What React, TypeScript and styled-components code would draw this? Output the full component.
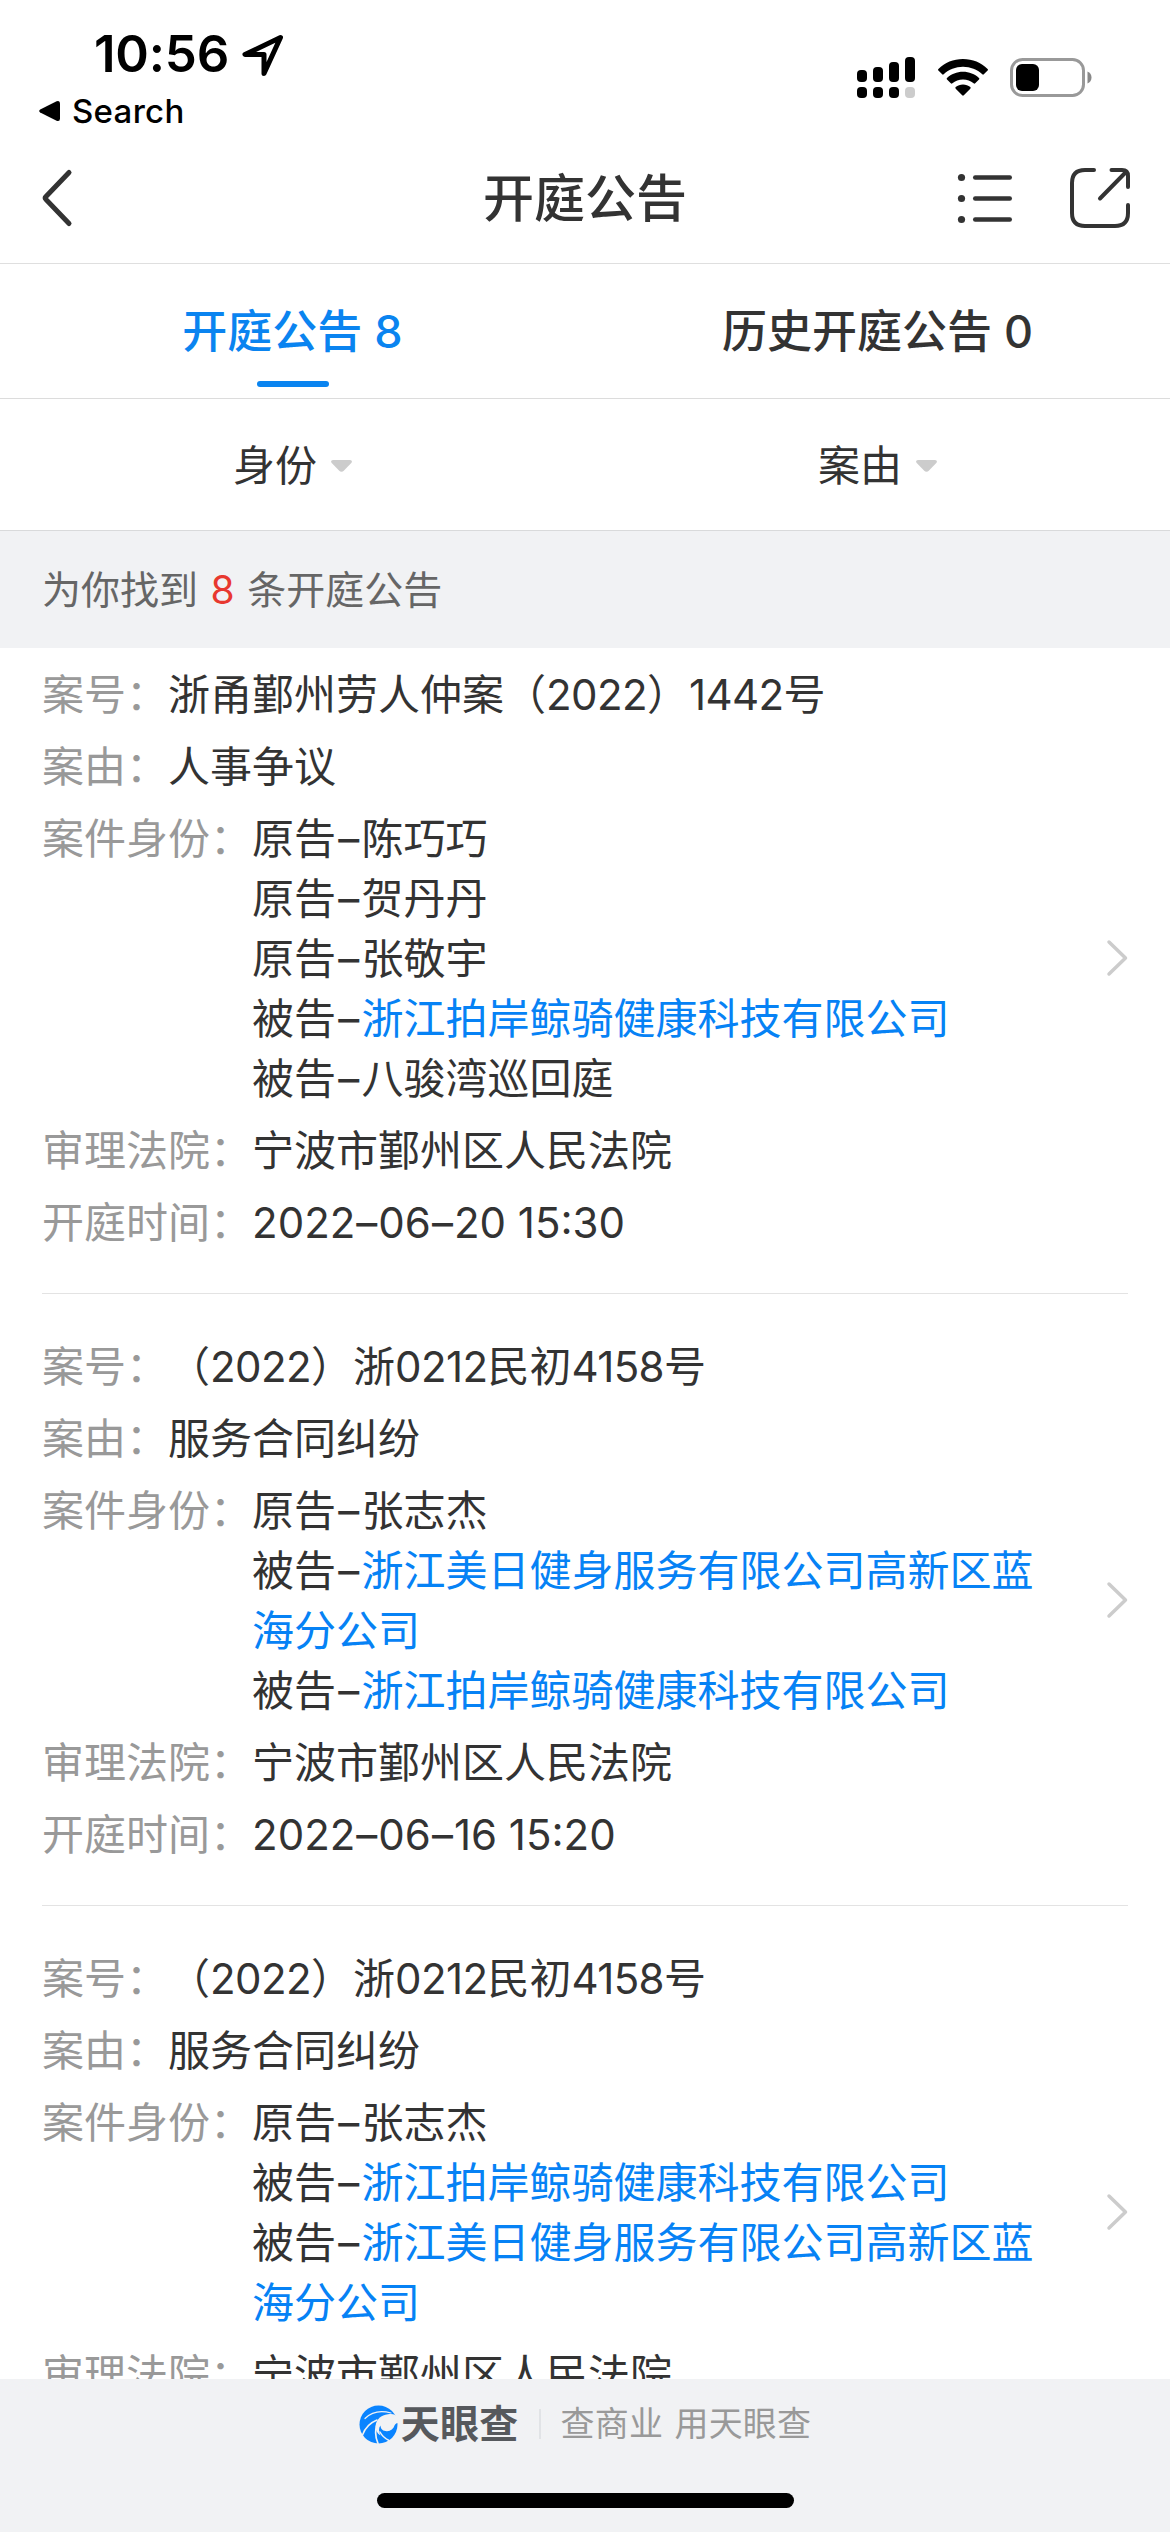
import React from "react";
import styled, { createGlobalStyle } from "styled-components";

const GlobalStyle = createGlobalStyle`
  *, *::before, *::after { box-sizing: border-box; }
  body { margin: 0; background: #fff; }
`;

const Screen = styled.div`
  width: 1170px;
  height: 2532px;
  display: flex;
  flex-direction: column;
  overflow: hidden;
  background: #fff;
  color: #333;
  font-family: Inter, "Noto Sans CJK SC", sans-serif;
  font-size: 42px;
  font-weight: 385;
  line-height: 60px;
  svg { display: block; flex: none; }
`;

const StatusBar = styled.div`
  height: 132px;
  flex: none;
  display: flex;
  justify-content: space-between;
  color: #000;
`;

const StatusLeft = styled.div`
  display: flex;
  flex-direction: column;
  padding: 24px 0 0 39px;
`;

const ClockRow = styled.div`
  display: flex;
  align-items: center;
  gap: 12px;
  height: 60px;
  padding-left: 55px;
`;

const Clock = styled.span`
  font-size: 51px;
  font-weight: 600;
  letter-spacing: -0.2px;
`;

const ReturnRow = styled.div`
  display: flex;
  align-items: center;
  gap: 12px;
  height: 54px;
  font-size: 33px;
  font-weight: 450;
  letter-spacing: 0.3px;
`;

const StatusRight = styled.div`
  display: flex;
  align-items: flex-start;
  gap: 22px;
  padding: 57px 78px 0 0;
`;

const NavBar = styled.header`
  height: 132px;
  flex: none;
  display: grid;
  grid-template-columns: 1fr auto 1fr;
  align-items: center;
  padding: 0 39px;
  border-bottom: 1px solid #dfdfdf;
`;

const NavTitle = styled.h1`
  margin: 2px 0 0;
  font-size: 51px;
  font-weight: 500;
`;

const NavActions = styled.div`
  display: flex;
  justify-content: flex-end;
  align-items: center;
  gap: 57px;
`;

const Tabs = styled.nav`
  height: 135px;
  flex: none;
  display: grid;
  grid-template-columns: 1fr 1fr;
  border-bottom: 1px solid #dcdcdc;
`;

const Tab = styled.div<{ $active?: boolean }>`
  display: flex;
  flex-direction: column;
  align-items: center;
  justify-content: space-between;
  padding: 38px 0 11px;
  font-size: 45px;
  font-weight: 500;
  color: ${(p) => (p.$active ? "#0a84f0" : "#333")};
  &::after {
    content: "";
    width: 72px;
    height: 6px;
    border-radius: 3px;
    background: ${(p) => (p.$active ? "#0a84f0" : "transparent")};
  }
`;

const Filters = styled.div`
  height: 132px;
  flex: none;
  display: grid;
  grid-template-columns: 1fr 1fr;
  border-bottom: 1px solid #d9dadb;
`;

const Filter = styled.div`
  display: flex;
  align-items: center;
  justify-content: center;
  gap: 14px;
  padding-top: 2px;
`;

const Summary = styled.div`
  height: 117px;
  flex: none;
  display: flex;
  align-items: center;
  padding: 0 42px;
  background: #f1f2f4;
  color: #666;
  font-size: 39px;
  white-space: pre;
`;

const Count = styled.span`
  margin: 0 1.6px;
  color: #e8382f;
`;

const List = styled.main`
  flex: 1;
  min-height: 0;
  overflow: hidden;
  padding: 0 42px;
`;

const Case = styled.article<{ $first?: boolean }>`
  display: flex;
  align-items: center;
  justify-content: space-between;
  padding: ${(p) => (p.$first ? "17px" : "43px")} 0 40px;
  border-bottom: 1px solid #e3e3e3;
`;

const Fields = styled.div`
  display: flex;
  flex-direction: column;
  gap: 12px;
  width: 1000px;
`;

const Field = styled.div`
  display: flex;
`;

const Label = styled.span`
  flex: none;
  color: #999;
`;

const Value = styled.div`
  flex: 1;
  min-width: 0;
`;

const Digits = styled.span`
  letter-spacing: -0.6px;
`;

const Party = styled.div`
  width: 790px;
  word-break: break-all;
`;

const Dash = styled.span`
  display: inline-block;
  width: 25.5px;
  text-align: center;
`;

const DateDash = styled.span`
  margin: 0 1px;
`;

const Company = styled.span`
  color: #0682f5;
`;

const Footer = styled.footer`
  height: 153px;
  flex: none;
  display: flex;
  flex-direction: column;
  align-items: center;
  justify-content: space-between;
  padding: 15px 0 24px;
  background: #f1f2f4;
`;

const BrandRow = styled.div`
  display: flex;
  align-items: center;
  height: 60px;
`;

const BrandName = styled.span`
  margin-left: 3px;
  font-size: 39px;
  font-weight: 700;
  letter-spacing: 0.3px;
  color: #56595d;
`;

const Divider = styled.span`
  width: 2px;
  height: 30px;
  margin: 0 20px;
  background: #e1e3e6;
`;

const Slogan = styled.span`
  font-size: 34px;
  letter-spacing: 0.2px;
  word-spacing: 1.5px;
  color: #999;
`;

const HomeBar = styled.div`
  width: 417px;
  height: 15px;
  border-radius: 8px;
  background: #000;
`;

const LocationArrow = () => (
  <svg width="43" height="43" viewBox="0 0 43 43" fill="none" stroke="#000" strokeWidth="5" strokeLinejoin="round">
    <path d="M39.5 4.5 4 21.5 H23 V40.5 Z" />
  </svg>
);

const ReturnTriangle = () => (
  <svg width="21" height="22" viewBox="0 0 21 22">
    <path d="M1.2 9.6 17.6 1.2Q21 0 21 3.4V18.6Q21 22 17.6 20.8L1.2 12.4Q-.8 11 1.2 9.6Z" />
  </svg>
);

const Signal = () => (
  <svg width="59" height="42" viewBox="0 0 59 42">
    <rect x="0" y="13" width="10" height="12" rx="4" />
    <rect x="16" y="10" width="10" height="15" rx="4" />
    <rect x="32" y="5" width="10" height="20" rx="4" />
    <rect x="48" y="0" width="10" height="25" rx="4" />
    <rect x="0" y="30" width="10" height="11" rx="4" />
    <rect x="16" y="30" width="10" height="11" rx="4" />
    <rect x="32" y="30" width="10" height="11" rx="4" />
    <rect x="48" y="30" width="10" height="11" rx="4" fill="#ccc" />
  </svg>
);

const Wifi = () => (
  <svg width="50" height="40" viewBox="0 0 50 40">
    <path d="M25 2C34.6 2 43.2 5.7 49.6 11.9Q50.4 12.7 49.6 13.5L45.8 17.3Q45.1 18 44.3 17.3C39.2 12.6 32.4 9.8 25 9.8S10.8 12.6 5.7 17.3Q4.9 18 4.2 17.3L.4 13.5Q-.4 12.7 .4 11.9C6.8 5.7 15.4 2 25 2Z" />
    <path d="M25 14.8C31.2 14.8 36.8 17.1 41 21Q41.8 21.8 41 22.6L37.2 26.3Q36.4 27 35.6 26.3C32.8 23.9 29.1 22.5 25 22.5S17.2 23.9 14.4 26.3Q13.6 27 12.8 26.3L9 22.6Q8.2 21.8 9 21C13.2 17.1 18.8 14.8 25 14.8Z" />
    <path d="M25 27.5C27.8 27.5 30.3 28.5 32.3 30.1Q33.1 30.9 32.3 31.7L25.8 38.3Q25 39.1 24.2 38.3L17.7 31.7Q16.9 30.9 17.7 30.1C19.7 28.5 22.2 27.5 25 27.5Z" />
  </svg>
);

const Battery = () => (
  <svg width="82" height="42" viewBox="0 0 82 42">
    <rect x="1.5" y="2.5" width="72" height="36" rx="11" fill="none" stroke="#999" strokeWidth="3" />
    <rect x="6" y="7" width="23" height="27" rx="6" />
    <path d="M77.5 14.5C80 15.5 81.5 17.7 81.5 20.5S80 25.5 77.5 26.5Z" fill="#888" />
  </svg>
);

const BackIcon = () => (
  <svg width="36" height="60" viewBox="0 0 36 60" fill="none" stroke="#333" strokeWidth="5" strokeLinecap="round" strokeLinejoin="round">
    <path d="M30 4.5 7 28.5Q5.5 30 7 31.5L30 55.5" />
  </svg>
);

const ListIcon = () => (
  <svg width="56" height="60" viewBox="0 0 56 60" fill="#333">
    {[9.5, 30.5, 51.5].map((y) => (
      <g key={y}>
        <circle cx="4.5" cy={y} r="3.6" />
        <rect x="16" y={y - 2.2} width="39" height="4.4" rx="2.2" />
      </g>
    ))}
  </svg>
);

const ShareIcon = () => (
  <svg width="61" height="60" viewBox="0 0 61 60" fill="none" stroke="#333" strokeWidth="4" strokeLinecap="round" strokeLinejoin="round">
    <path d="M24 2H15Q2 2 2 15V45Q2 58 15 58H45Q58 58 58 45V37" />
    <path d="M41.5 2H52Q58 2 58 8V19" />
    <path d="M30 30.5 55.5 4.5" />
  </svg>
);

const Caret = () => (
  <svg width="21" height="12" viewBox="0 0 21 12" fill="#ccc">
    <path d="M2 0H19Q22 .6 20.3 3L13 10.6Q10.5 13 8 10.6L.7 3Q-1 .6 2 0Z" />
  </svg>
);

const RowArrow = () => (
  <svg width="24" height="44" viewBox="0 0 24 44" fill="none" stroke="#ccc" strokeWidth="3.5" strokeLinecap="round" strokeLinejoin="round">
    <path d="M5 5 21.5 21 5 37" />
  </svg>
);

const BrandLogo = () => (
  <svg width="39" height="39" viewBox="0 0 39 39">
    <circle cx="19.5" cy="19.5" r="19" fill="#0a84ff" />
    <path
      d="M38.8 13C37 9 33.5 8.5 29 9.2C22 10 17.5 14 16.5 21C16.5 25 18 28.5 21.5 30.5C19.5 26.5 19.5 23 21.5 20.5C21.5 24.5 24.5 26.3 28 26.2C32 26 34.5 23.500 35.500 20.500C36.500 18.500 38 18 39 18Z"
      fill="#f1f2f4"
    />
    <g fill="none" stroke="#f1f2f4" strokeLinecap="round">
      <path d="M6 13.500C12 7.500 21 5 32 8" strokeWidth="1.200" />
      <path d="M18 15C10.500 18 6 23 3.500 30" strokeWidth="1.500" />
      <path d="M17.500 21C16 27 16.500 33 19 38.500" strokeWidth="1.700" />
      <path d="M21 27C23 31 26 33.500 30 35.500" strokeWidth="1.500" />
    </g>
  </svg>
);

type PartyData = { role: string; name: string; link?: boolean };
type CaseData = {
  no: React.ReactNode;
  cause: string;
  parties: PartyData[];
  court: string;
  date: string[];
  time: string;
};

const jingqi: PartyData = { role: "被告", name: "浙江拍岸鲸骑健康科技有限公司", link: true };
const meiri: PartyData = { role: "被告", name: "浙江美日健身服务有限公司高新区蓝海分公司", link: true };
const court = "宁波市鄞州区人民法院";
const civilNo = (
  <>
    （<Digits>2022</Digits>）浙<Digits>0212</Digits>民初<Digits>4158</Digits>号
  </>
);

const cases: CaseData[] = [
  {
    no: (
      <>
        浙甬鄞州劳人仲案（<Digits>2022</Digits>）<Digits>1442</Digits>号
      </>
    ),
    cause: "人事争议",
    parties: [
      { role: "原告", name: "陈巧巧" },
      { role: "原告", name: "贺丹丹" },
      { role: "原告", name: "张敬宇" },
      jingqi,
      { role: "被告", name: "八骏湾巡回庭" },
    ],
    court,
    date: ["2022", "06", "20"],
    time: "15:30",
  },
  {
    no: civilNo,
    cause: "服务合同纠纷",
    parties: [{ role: "原告", name: "张志杰" }, meiri, jingqi],
    court,
    date: ["2022", "06", "16"],
    time: "15:20",
  },
  {
    no: civilNo,
    cause: "服务合同纠纷",
    parties: [{ role: "原告", name: "张志杰" }, jingqi, meiri],
    court,
    date: ["2022", "06", "16"],
    time: "15:20",
  },
];

const CaseItem = ({ data, first }: { data: CaseData; first: boolean }) => (
  <Case $first={first}>
    <Fields>
      <Field>
        <Label>案号：</Label>
        <Value>{data.no}</Value>
      </Field>
      <Field>
        <Label>案由：</Label>
        <Value>{data.cause}</Value>
      </Field>
      <Field>
        <Label>案件身份：</Label>
        <Value>
          {data.parties.map((p) => (
            <Party key={p.name}>
              {p.role}
              <Dash>–</Dash>
              {p.link ? <Company>{p.name}</Company> : p.name}
            </Party>
          ))}
        </Value>
      </Field>
      <Field>
        <Label>审理法院：</Label>
        <Value>{data.court}</Value>
      </Field>
      <Field>
        <Label>开庭时间：</Label>
        <Value>
          {data.date[0]}
          <DateDash>–</DateDash>
          {data.date[1]}
          <DateDash>–</DateDash>
          {data.date[2]} {data.time}
        </Value>
      </Field>
    </Fields>
    <RowArrow />
  </Case>
);

export default function App() {
  return (
    <Screen>
      <GlobalStyle />
      <StatusBar>
        <StatusLeft>
          <ClockRow>
            <Clock>10:56</Clock>
            <LocationArrow />
          </ClockRow>
          <ReturnRow>
            <ReturnTriangle />
            Search
          </ReturnRow>
        </StatusLeft>
        <StatusRight>
          <Signal />
          <Wifi />
          <Battery />
        </StatusRight>
      </StatusBar>
      <NavBar>
        <BackIcon />
        <NavTitle>开庭公告</NavTitle>
        <NavActions>
          <ListIcon />
          <ShareIcon />
        </NavActions>
      </NavBar>
      <Tabs>
        <Tab $active>开庭公告 8</Tab>
        <Tab>历史开庭公告 0</Tab>
      </Tabs>
      <Filters>
        <Filter>
          身份
          <Caret />
        </Filter>
        <Filter>
          案由
          <Caret />
        </Filter>
      </Filters>
      <Summary>
        为你找到 <Count>8</Count> 条开庭公告
      </Summary>
      <List>
        {cases.map((c, i) => (
          <CaseItem key={i} data={c} first={i === 0} />
        ))}
      </List>
      <Footer>
        <BrandRow>
          <BrandLogo />
          <BrandName>天眼查</BrandName>
          <Divider />
          <Slogan>查商业 用天眼查</Slogan>
        </BrandRow>
        <HomeBar />
      </Footer>
    </Screen>
  );
}
